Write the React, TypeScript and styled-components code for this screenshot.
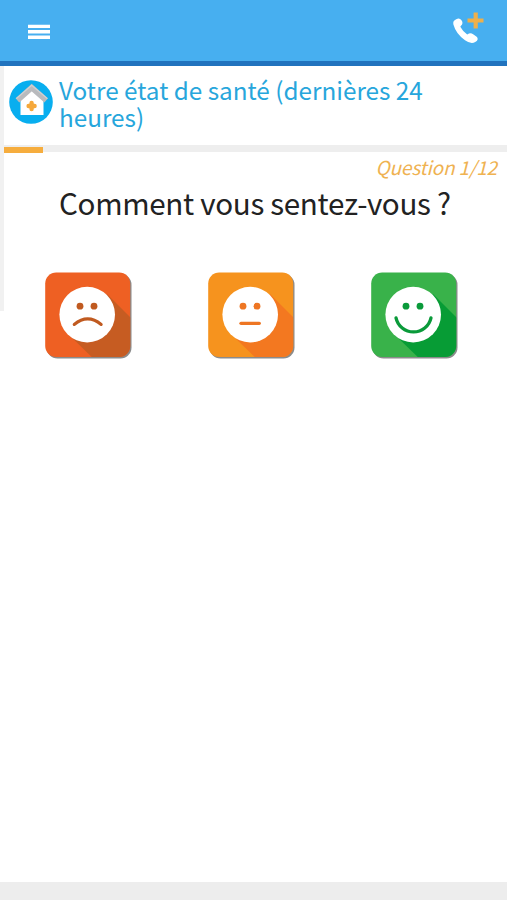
import React from "react";
import styled, { createGlobalStyle } from "styled-components";

const GlobalStyle = createGlobalStyle`
  * { box-sizing: border-box; }
  body { margin: 0; background: #fff; font-family: "Noto Sans CJK SC", "Noto Sans", sans-serif; }
  h1, h2, p { margin: 0; font-weight: 400; white-space: nowrap; }
`;

const Screen = styled.div`
  display: flex;
  flex-direction: column;
  width: 507px;
  height: 900px;
  overflow: hidden;
  background: #fff;
`;

const TopBar = styled.header`
  display: flex;
  justify-content: space-between;
  flex: none;
  height: 66px;
  padding: 11px 22px 0 27px;
  background: #47aff0;
  border-bottom: 5px solid #2173be;
`;

const IconButton = styled.button`
  display: flex;
  align-items: flex-start;
  padding: 0;
  border: 0;
  background: none;
`;

const MenuIcon = styled.svg`
  margin-top: 13px;
`;

const Body = styled.div`
  display: flex;
  flex: 1;
`;

const SideStrip = styled.div`
  flex: none;
  width: 4px;
  height: 245px;
  background: #f1f1f1;
`;

const Content = styled.main`
  flex: 1;
  min-width: 0;
`;

const SectionHeader = styled.div`
  display: flex;
  gap: 6px;
  height: 79px;
  padding: 10px 0 0 5px;
`;

const SectionIcon = styled.svg`
  flex: none;
  margin-top: 4px;
`;

const SectionTitle = styled.h1`
  color: #27a6dc;
  font-size: 24.3px;
  line-height: 27px;
`;

const ProgressTrack = styled.div`
  display: flex;
  align-items: flex-end;
  height: 8px;
  background: linear-gradient(#eee 7px, #fff 7px);
`;

const ProgressBar = styled.div<{ $step: number; $total: number }>`
  width: ${({ $step, $total }) => `calc(${($step / $total) * 100}% - 3px)`};
  height: 6px;
  background: #f6ad3e;
`;

const Counter = styled.p`
  padding-right: 10px;
  color: #efb251;
  font-size: 19px;
  font-style: italic;
  letter-spacing: -0.15px;
  line-height: 28px;
  text-align: right;
`;

const Question = styled.h2`
  padding: 2px 0 0 55px;
  color: #222;
  font-size: 29.6px;
  letter-spacing: -0.33px;
  line-height: 40px;
`;

const Choices = styled.div`
  display: flex;
  gap: 75px;
  padding: 49px 0 0 41px;
`;

const Choice = styled(IconButton)`
  width: 88px;
  height: 88px;
`;

const Footer = styled.footer`
  flex: none;
  height: 18px;
  background: #ededed;
`;

type Mood = { label: string; base: string; shade: string; ink: string; mouth: string; stroke: number };

const moods: Mood[] = [
  { label: "Mal", base: "#ee6023", shade: "#c65c22", ink: "#c05a20", mouth: "M29.2 52.5Q42.7 41.3 56.2 52.5", stroke: 3 },
  { label: "Moyen", base: "#f6931e", shade: "#f37820", ink: "#ee7623", mouth: "M33 51.3H51.3", stroke: 3.3 },
  { label: "Bien", base: "#39b24a", shade: "#079c35", ink: "#0a9a3a", mouth: "M25 45.8A17.9 17.9 0 0 0 60 45.8", stroke: 3.3 },
];

const MoodFace = ({ mood, id }: { mood: Mood; id: string }) => (
  <svg width="88" height="88" viewBox="0 0 88 88">
    <clipPath id={id}>
      <rect x="0.2" y="0.5" width="85" height="84.5" rx="11" />
    </clipPath>
    <rect x="1.5" y="1.8" width="85" height="84.7" rx="11" fill="#777" opacity=".85" />
    <g clipPath={`url(#${id})`}>
      <rect width="86" height="86" fill={mood.base} />
      <path d="M62 22L92 52V92H54L22 61Z" fill={mood.shade} />
    </g>
    <circle cx="42.2" cy="42.6" r="27.8" fill="#fff" />
    <circle cx="35" cy="34.2" r="3.4" fill={mood.ink} />
    <circle cx="49" cy="34.2" r="3.4" fill={mood.ink} />
    <path d={mood.mouth} fill="none" stroke={mood.ink} strokeWidth={mood.stroke} strokeLinecap="round" />
  </svg>
);

export default function App() {
  return (
    <>
      <GlobalStyle />
      <Screen>
        <TopBar>
          <IconButton aria-label="Menu">
            <MenuIcon width="24" height="16" viewBox="0 0 24 16">
              <path d="M1 2.4H23M1 7.8H23M1 13.2H23" stroke="#fff" strokeWidth="3.4" />
            </MenuIcon>
          </IconButton>
          <IconButton aria-label="Appeler">
            <svg width="33" height="34" viewBox="0 0 33 34">
              <path
                d="M4.2 8.3Q7.4 6.4 9.3 9.1Q11.8 12.3 9 14.8L8.3 15.8Q10.5 20 15.2 23.6L17 22.5Q19 21.7 21.5 23.5L25 26Q27 29 23.2 31.1Q19 33.6 13 29.3Q4 23 1.4 13.6Q.5 9.8 4.2 8.3Z"
                fill="#fff"
              />
              <path d="M23.7 1.5V17.5M15.5 9.5H31.5" stroke="#eeb04b" strokeWidth="4.2" />
            </svg>
          </IconButton>
        </TopBar>
        <Body>
          <SideStrip />
          <Content>
            <SectionHeader>
              <SectionIcon width="44" height="44" viewBox="0 0 44 44">
                <circle cx="22" cy="22" r="21.8" fill="#08aeef" />
                <path d="M11.5 35V18L22.7 8.5L34.5 19V35Z" fill="#fff" />
                <path d="M8.4 20.3L22.7 7.6L37.2 20.3" fill="none" stroke="#b9babd" strokeWidth="5.6" />
                <path d="M7.3 18.6L22.7 5.2L38.3 18.6" fill="none" stroke="#d0d1d3" strokeWidth="1.2" />
                <path d="M22.6 23V29M19.6 26H25.6" stroke="#f5a83b" strokeWidth="4.4" strokeLinecap="round" />
              </SectionIcon>
              <SectionTitle>
                Votre état de santé (dernières 24
                <br />
                heures)
              </SectionTitle>
            </SectionHeader>
            <ProgressTrack>
              <ProgressBar $step={1} $total={12} />
            </ProgressTrack>
            <Counter>Question 1/12</Counter>
            <Question>Comment vous sentez-vous ?</Question>
            <Choices>
              {moods.map((mood) => (
                <Choice key={mood.label} aria-label={mood.label}>
                  <MoodFace mood={mood} id={`tile-${mood.label}`} />
                </Choice>
              ))}
            </Choices>
          </Content>
        </Body>
        <Footer />
      </Screen>
    </>
  );
}
